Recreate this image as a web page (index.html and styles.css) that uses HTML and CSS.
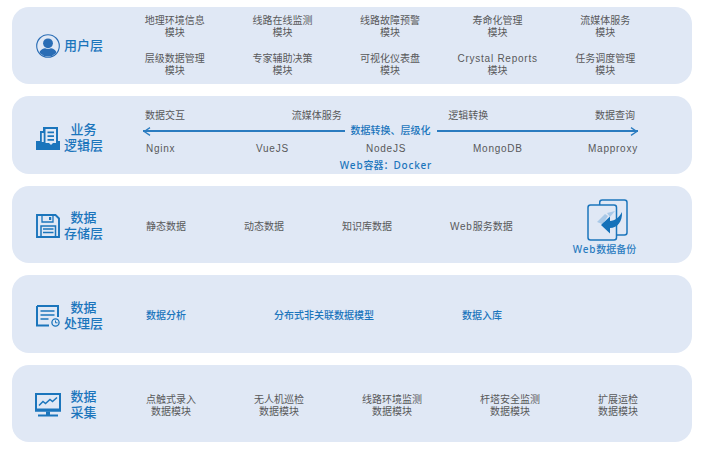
FILE: index.html
```html
<!DOCTYPE html>
<html lang="zh-CN">
<head>
<meta charset="utf-8">
<title>系统架构</title>
<link rel="stylesheet" href="styles.css">
</head>
<body>
<main class="stack">
  <section class="layer">
    <div class="head head-user">
      <svg class="ico" viewBox="0 0 24 24"><defs><clipPath id="c"><circle cx="12" cy="12" r="10.6"/></clipPath></defs><circle cx="12" cy="12" r="11.3" fill="none" stroke="#2a6db5" stroke-width="1.1"/><circle cx="12" cy="9.3" r="4.9" fill="#2a6db5"/><path clip-path="url(#c)" d="M2 24c0-6 3.5-9.3 7-9.8 1.8 1 4.200 1 6 0 3.500.5 7 3.800 7 9.800z" fill="#2a6db5"/></svg>
      <h2 class="name">用户层</h2>
    </div>
    <div class="modules">
      <p class="m">地理环境信息<br>模块</p>
      <p class="m">线路在线监测<br>模块</p>
      <p class="m">线路故障预警<br>模块</p>
      <p class="m">寿命化管理<br>模块</p>
      <p class="m">流媒体服务<br>模块</p>
      <p class="m">层级数据管理<br>模块</p>
      <p class="m">专家辅助决策<br>模块</p>
      <p class="m">可视化仪表盘<br>模块</p>
      <p class="m"><span class="lat">Crystal Reports</span><br>模块</p>
      <p class="m">任务调度管理<br>模块</p>
    </div>
  </section>

  <section class="layer">
    <div class="head head-biz">
      <svg class="ico" viewBox="0 0 24 24"><path d="M0 15h4V5h3V1h15v14h2v9H0z" fill="#1b75bc"/><path d="M9.500 3h10.500v14h-3l-2 2-2-2H9.500z" fill="#e0e8f5"/><path d="M5.800 7h1.900v9H5.800z" fill="#e0e8f5"/><path d="M11.500 5.500h6.500v1.700h-6.500zM11.500 9.200h6.500v1.700h-6.500zM11.500 13h6.500v1.700h-6.500z" fill="#1b75bc"/></svg>
      <h2 class="name">业务<br>逻辑层</h2>
    </div>
    <div class="logic">
      <div class="tops"><span>数据交互</span><span>流媒体服务</span><span>逻辑转换</span><span>数据查询</span></div>
      <div class="flow">
        <svg class="chev" viewBox="0 0 8 9"><path d="M7 .6 1.200 4.500 7 8.400" fill="none" stroke="#2b7cc0" stroke-width="1.300"/></svg>
        <span class="rule"></span>
        <strong class="flow-label">数据转换、层级化</strong>
        <span class="rule"></span>
        <svg class="chev chev-r" viewBox="0 0 8 9"><path d="M1 .6 6.800 4.500 1 8.400" fill="none" stroke="#2b7cc0" stroke-width="1.300"/></svg>
      </div>
      <div class="stack-names lat"><span>Nginx</span><span>VueJS</span><span>NodeJS</span><span>MongoDB</span><span>Mapproxy</span></div>
      <div class="docker"><span class="lat-wide">Web</span>容器：<span class="lat-wide">Docker</span></div>
    </div>
  </section>

  <section class="layer">
    <div class="head">
      <svg class="ico" viewBox="0 0 24 24"><path d="M1 1h18.500L23 4.500V23H1z" fill="none" stroke="#1b75bc" stroke-width="1.900"/><path d="M6 1.500V8h11V1.500" fill="none" stroke="#1b75bc" stroke-width="1.300"/><rect x="13" y="3" width="2.200" height="3" fill="#1b75bc"/><path d="M5 22.500V12h14.500v10.500" fill="none" stroke="#1b75bc" stroke-width="1.500"/><path d="M7 15h10.500M7 18.500h10.500" stroke="#1b75bc" stroke-width="1.300"/></svg>
      <h2 class="name">数据<br>存储层</h2>
    </div>
    <div class="row row-store">
      <span>静态数据</span><span>动态数据</span><span>知识库数据</span><span><span class="lat">Web</span>服务数据</span>
      <div class="backup">
        <svg class="backup-ico" viewBox="0 0 42 42"><rect x="12.700" y="1" width="27.300" height="35" rx="2.500" fill="none" stroke="#1b75bc" stroke-width="1.500"/><rect x="1" y="6" width="28.500" height="35" rx="2.500" fill="#e0e8f5" stroke="#1b75bc" stroke-width="1.500"/><path d="M10 23 18 15l3 2-4 6 3 4z" fill="#a9c9e8"/><path d="M20 14l8-2-5 6z" fill="#a9c9e8"/><path d="M14 26l9-8.500V22c5 0 9-3.500 12-9 .5 9.500-4.500 16-12 16v5.500z" fill="#1471b9"/></svg>
        <strong class="backup-label"><span class="lat-wide">Web</span>数据备份</strong>
      </div>
    </div>
  </section>

  <section class="layer">
    <div class="head">
      <svg class="ico ico-short" viewBox="0 0 24 22"><path d="M1 1h21v11M1 1v19.500h12" fill="none" stroke="#1b75bc" stroke-width="2"/><path d="M4.500 6h14M4.500 10h14M4.500 14h8" stroke="#1b75bc" stroke-width="1.400"/><circle cx="19.500" cy="17.500" r="3.600" fill="none" stroke="#1b75bc" stroke-width="1.300"/><path d="M19.500 15.500v2.300h2" fill="none" stroke="#1b75bc" stroke-width="1"/></svg>
      <h2 class="name">数据<br>处理层</h2>
    </div>
    <div class="row row-proc"><strong>数据分析</strong><strong>分布式非关联数据模型</strong><strong>数据入库</strong></div>
  </section>

  <section class="layer">
    <div class="head">
      <svg class="ico ico-wide" viewBox="0 0 26 24"><rect x="1" y="1" width="24" height="16.500" fill="none" stroke="#1b75bc" stroke-width="2"/><path d="M0 15.500h26V18.500H0z" fill="#1b75bc"/><path d="M4 12.500 8 8.500l2.500 2L15 6.500l2.500 2L22 4.500" fill="none" stroke="#1b75bc" stroke-width="1.500"/><path d="M11 18.500h4v3h-4zM3 21.500h20v2H3z" fill="#1b75bc"/></svg>
      <h2 class="name">数据<br>采集</h2>
    </div>
    <div class="row row-collect">
      <p class="m">点触式录入<br>数据模块</p>
      <p class="m">无人机巡检<br>数据模块</p>
      <p class="m">线路环境监测<br>数据模块</p>
      <p class="m">杆塔安全监测<br>数据模块</p>
      <p class="m">扩展运检<br>数据模块</p>
    </div>
  </section>
</main>
</body>
</html>
```

FILE: styles.css
```css
* { box-sizing: border-box; }
html, body { margin: 0; padding: 0; background: #fff; }
body {
  width: 703px;
  height: 451px;
  overflow: hidden;
  font-family: "Liberation Sans", "Noto Sans CJK SC", sans-serif;
  font-size: 10px;
  color: #58585a;
}
.stack {
  display: grid;
  grid-auto-rows: 77.3px;
  row-gap: 12.2px;
  padding: 7px 11px 0 12px;
}
.layer {
  display: grid;
  grid-template-columns: 109px 1fr;
  background: #e0e8f5;
  border-radius: 17px;
}
.head {
  display: flex;
  align-items: center;
  padding: 3px 0 0 24px;
  gap: 3px;
}
.head-user { padding-top: 1px; }
.head-biz { padding-top: 6px; }
.ico { width: 24px; height: 24px; flex: none; }
.ico-short { height: 22px; }
.ico-wide { width: 26px; margin: 0 -1px 0 -1px; }
.name {
  margin: 0;
  width: 41px;
  font-size: 13px;
  line-height: 16px;
  font-weight: 500;
  color: #1b75bc;
  text-align: center;
}
.m { margin: 0; line-height: 12px; text-align: center; white-space: nowrap; }
.lat { letter-spacing: .75px; }
.lat-wide { font-family: "Noto Sans", "Liberation Sans", sans-serif; letter-spacing: .8px; }
.modules {
  display: grid;
  grid-template-columns: repeat(5, 107.6px);
  row-gap: 14px;
  align-content: start;
  padding-top: 8px;
}
.logic { padding: 13px 54px 0 22px; line-height: 16.5px; }
.tops { display: flex; justify-content: space-between; padding: 0 3px 0 2px; line-height: 13.5px; }
.flow { display: flex; align-items: center; height: 16.5px; }
.chev { width: 8px; height: 9px; flex: none; margin-right: -8px; }
.chev-r { margin: 0 0 0 -8px; }
.rule { flex: 1; height: 1.5px; background: #2b7cc0; }
.flow-label { padding: 0 6px; color: #1b75bc; font-weight: 500; }
.stack-names {
  display: grid;
  grid-template-columns: 110px 110px 107px 115px auto;
  padding-left: 3px;
  margin-top: 2px;
}
.docker { text-align: center; color: #1b75bc; font-weight: 500; padding-right: 9px; line-height: 15.5px; }
.row { display: flex; align-items: center; padding-left: 25px; white-space: nowrap; }
.row strong { font-weight: 500; color: #1b75bc; }
.row-store { gap: 58px; padding-top: 2px; }
.row-proc { gap: 88px; }
.row-collect { gap: 58px; padding-top: 4px; }
.backup { display: flex; flex-direction: column; align-items: center; gap: 2px; margin: 4px 0 0 2px; }
.backup-ico { width: 42px; height: 42px; margin-left: 7px; }
.row .backup-label { line-height: 13px; color: #2b7cc0; }
```
